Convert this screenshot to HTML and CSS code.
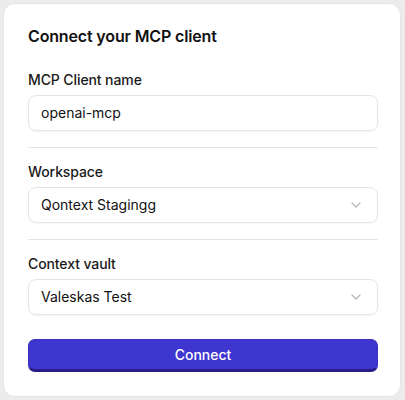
FILE: index.html
```html
<!DOCTYPE html>
<html>
<head>
<meta charset="utf-8">
<link rel="stylesheet" href="styles.css">
</head>
<body>
<div class="card">
  <h1 class="title">Connect your MCP client</h1>
  <div class="field">
    <label class="label">MCP Client name</label>
    <div class="input">openai-mcp</div>
  </div>
  <hr class="divider">
  <div class="field">
    <label class="label">Workspace</label>
    <div class="input select">
      <span>Qontext Stagingg</span>
      <svg class="chev" width="10" height="6" viewBox="0 0 10 6"><path d="M1 1l4 4 4-4" fill="none" stroke="#b4b4b4" stroke-width="1.2" stroke-linecap="round" stroke-linejoin="round"/></svg>
    </div>
  </div>
  <hr class="divider">
  <div class="field">
    <label class="label">Context vault</label>
    <div class="input select">
      <span>Valeskas Test</span>
      <svg class="chev" width="10" height="6" viewBox="0 0 10 6"><path d="M1 1l4 4 4-4" fill="none" stroke="#b4b4b4" stroke-width="1.2" stroke-linecap="round" stroke-linejoin="round"/></svg>
    </div>
  </div>
  <button class="btn">Connect</button>
</div>
</body>
</html>
```
FILE: styles.css
```css
* { box-sizing: border-box; }
html, body { margin: 0; }
body {
  background: #ececec;
  padding: 3px 4px 3px 3px;
  font-family: Inter, "Noto Sans", sans-serif;
  color: #111;
  height: 400px;
}
.card {
  background: #fff;
  border: 1px solid #e4e4e4;
  border-radius: 12px;
  padding: 20px 22px 24px 24px;
  height: 394px;
  display: flex;
  flex-direction: column;
}
.title {
  margin: 0 0 22px;
  font-size: 16px;
  font-weight: 600;
  line-height: 24px;
  letter-spacing: -0.15px;
}
.field {
  display: flex;
  flex-direction: column;
  gap: 5px;
}
.label {
  font-size: 14px;
  font-weight: 500;
  line-height: 20px;
  color: #1a1a1a;
  letter-spacing: -0.1px;
}
.input {
  height: 36px;
  border: 1px solid #e5e5e5;
  border-radius: 8px;
  padding: 0 12px;
  font-size: 14px;
  line-height: 34px;
  color: #111;
  box-shadow: 0 1px 2px rgba(0,0,0,0.04);
}
.select {
  display: flex;
  align-items: center;
  justify-content: space-between;
  padding-right: 16px;
}
.chev { display: block; }
.divider {
  border: 0;
  border-top: 1px solid #e5e5e5;
  margin: 16px 0 14px;
  height: 0;
}
.btn {
  margin-top: 24px;
  height: 36px;
  border: 1px solid #3a30bd;
  border-bottom: 3px solid #261e86;
  border-radius: 7px;
  background: #3f35d0;
  color: #fff;
  font-family: Inter, "Noto Sans", sans-serif;
  font-size: 14px;
  font-weight: 500;
  padding: 0;
}
```
